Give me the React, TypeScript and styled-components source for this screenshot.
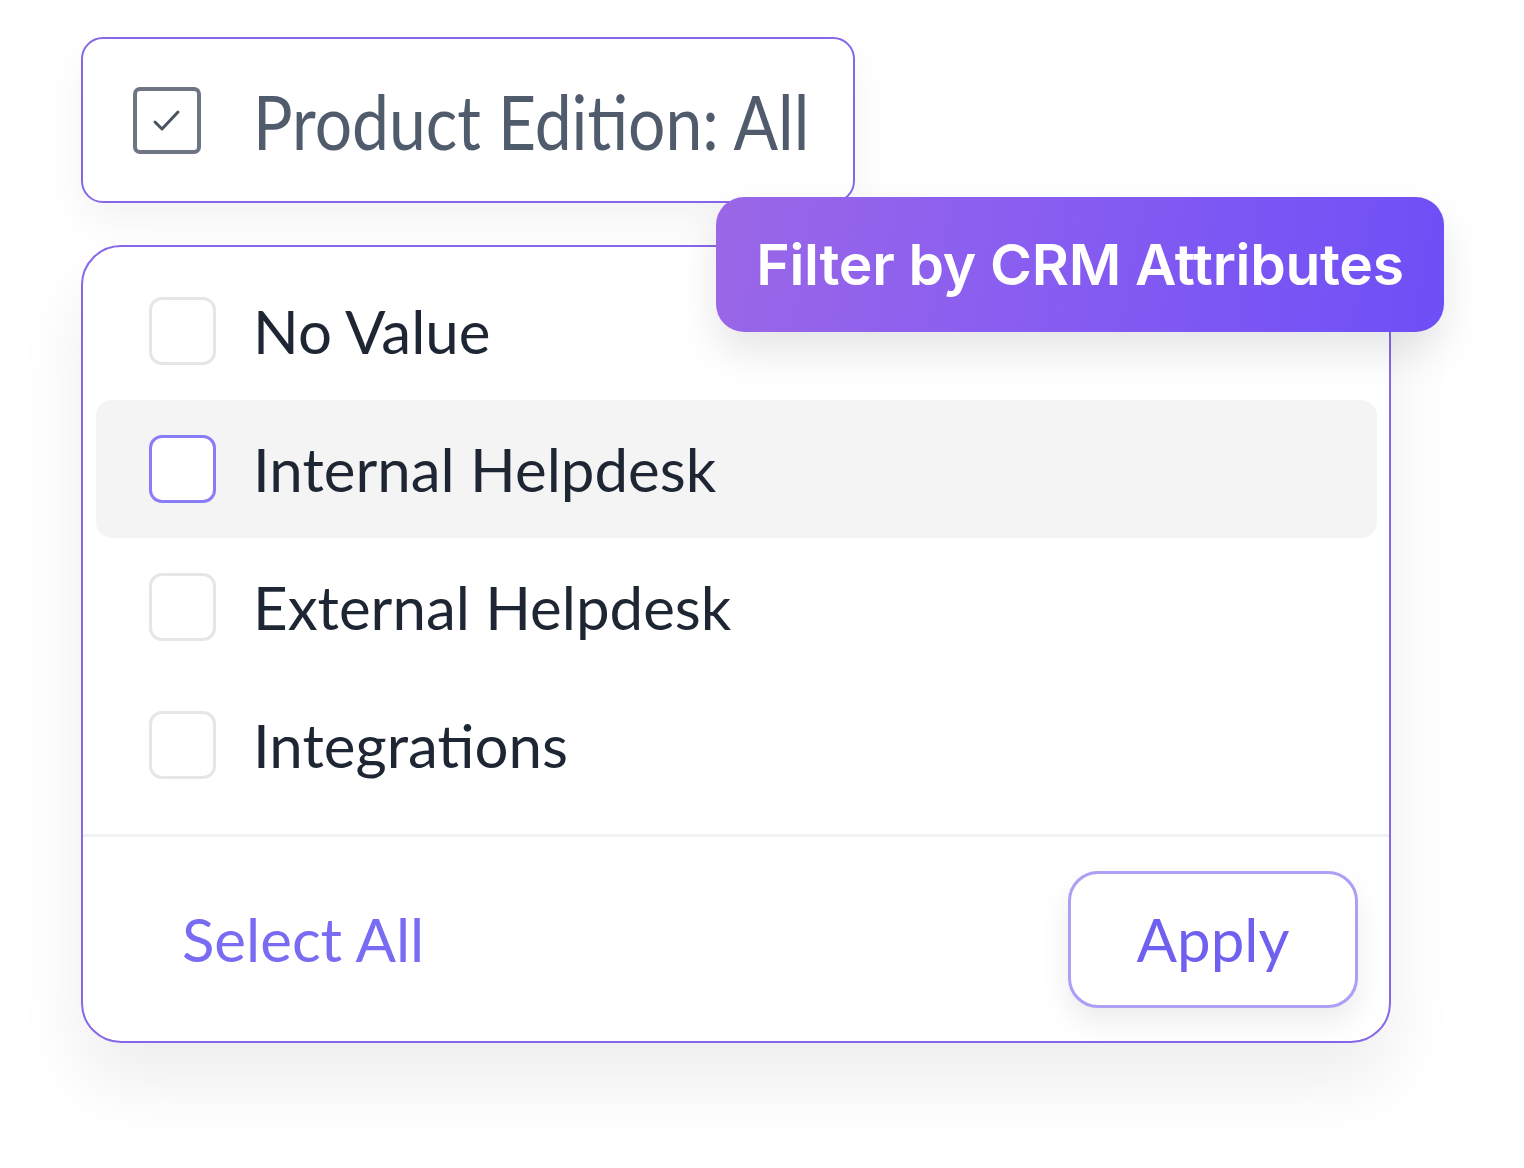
import styled, { createGlobalStyle } from "styled-components";

const GlobalStyle = createGlobalStyle`
  html, body {
    margin: 0;
    padding: 0;
    background: #ffffff;
  }
  body {
    font-family: Lato, "Open Sans", sans-serif;
  }
`;

const Page = styled.div`
  width: 1524px;
  height: 1168px;
  padding: 37px 0 0 81px;
  box-sizing: border-box;
`;

const Stage = styled.div`
  position: relative;
  width: 1310px;
  display: flex;
  flex-direction: column;
  gap: 42px;
`;

const Trigger = styled.div`
  width: 774px;
  height: 166px;
  box-sizing: border-box;
  border: 2px solid #8667e8;
  border-radius: 22px;
  background: #ffffff;
  display: flex;
  align-items: center;
  padding-left: 50px;
  gap: 52px;
  box-shadow: 0 18px 40px rgba(0, 0, 0, 0.05);
`;

const CheckedBox = styled.div`
  width: 68px;
  height: 67px;
  box-sizing: border-box;
  border: 4px solid #6e7684;
  border-radius: 7px;
  display: flex;
  align-items: center;
  justify-content: center;
`;

const TriggerText = styled.span`
  display: inline-block;
  font-size: 66px;
  color: #505b6b;
  transform: scaleY(1.14);
`;

const Panel = styled.div`
  width: 1310px;
  height: 798px;
  box-sizing: border-box;
  border: 2px solid #8667e8;
  border-radius: 40px;
  background: #ffffff;
  display: flex;
  flex-direction: column;
  box-shadow: 0 40px 70px rgba(0, 0, 0, 0.07);
`;

const List = styled.div`
  display: flex;
  flex-direction: column;
  padding: 15px 12px 20px 13px;
`;

const Row = styled.div<{ $active?: boolean }>`
  height: 138px;
  display: flex;
  align-items: center;
  gap: 37px;
  padding-left: 53px;
  border-radius: 16px;
  background: ${(p) => (p.$active ? "#f4f4f5" : "transparent")};
`;

const Box = styled.div<{ $active?: boolean }>`
  width: 67px;
  height: 68px;
  box-sizing: border-box;
  border: 3px solid ${(p) => (p.$active ? "#8a7cf4" : "#e6e6e8")};
  border-radius: 13px;
  background: #ffffff;
  flex-shrink: 0;
`;

const Label = styled.span`
  font-size: 60px;
  color: #1f2633;
  line-height: 1;
`;

const Divider = styled.div`
  height: 3px;
  background: #f2f2f3;
`;

const Footer = styled.div`
  flex: 1;
  display: flex;
  align-items: center;
  justify-content: space-between;
  padding: 0 31px 0 99px;
`;

const SelectAll = styled.span`
  font-size: 60px;
  color: #7a6cf2;
`;

const ApplyButton = styled.button`
  width: 290px;
  height: 137px;
  box-sizing: border-box;
  border: 3px solid #ab9ff6;
  border-radius: 30px;
  background: #ffffff;
  font-family: Lato, "Open Sans", sans-serif;
  font-size: 60px;
  color: #6f60f0;
  box-shadow: 0 14px 30px rgba(0, 0, 0, 0.08);
`;

const Tooltip = styled.div`
  position: absolute;
  left: 635px;
  top: 160px;
  width: 728px;
  height: 135px;
  box-sizing: border-box;
  border-radius: 28px;
  background: linear-gradient(100deg, #9a67e6 0%, #8a5ef0 40%, #6e4ff6 100%);
  color: #ffffff;
  font-family: Inter, "Noto Sans", sans-serif;
  font-weight: 600;
  font-size: 57px;
  letter-spacing: -0.3px;
  display: flex;
  align-items: center;
  justify-content: center;
  box-shadow: 0 20px 40px rgba(0, 0, 0, 0.1);
`;

const options = [
  { label: "No Value", active: false },
  { label: "Internal Helpdesk", active: true },
  { label: "External Helpdesk", active: false },
  { label: "Integrations", active: false },
];

function App() {
  return (
    <>
      <GlobalStyle />
      <Page>
        <Stage>
          <Trigger>
            <CheckedBox>
              <svg width="34" height="30" viewBox="0 0 34 30" fill="none">
                <path
                  d="M5 17 L12 24 L28 7"
                  stroke="#4b5361"
                  strokeWidth="3"
                  strokeLinecap="round"
                  strokeLinejoin="round"
                />
              </svg>
            </CheckedBox>
            <TriggerText>Product Edition: All</TriggerText>
          </Trigger>
          <Panel>
            <List>
              {options.map((o) => (
                <Row key={o.label} $active={o.active}>
                  <Box $active={o.active} />
                  <Label>{o.label}</Label>
                </Row>
              ))}
            </List>
            <Divider />
            <Footer>
              <SelectAll>Select All</SelectAll>
              <ApplyButton>Apply</ApplyButton>
            </Footer>
          </Panel>
          <Tooltip>Filter by CRM Attributes</Tooltip>
        </Stage>
      </Page>
    </>
  );
}

export default App;
